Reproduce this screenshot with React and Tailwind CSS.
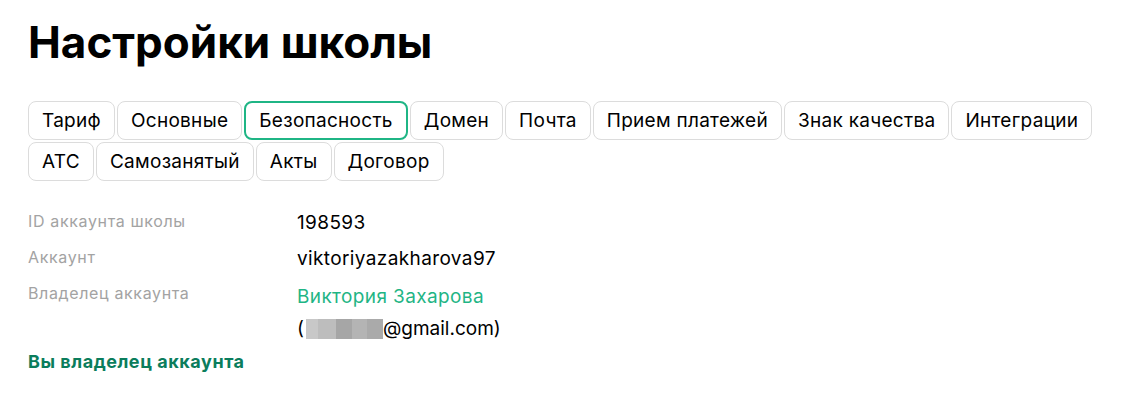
import { useState } from "react";

const tabs = [
  "Тариф",
  "Основные",
  "Безопасность",
  "Домен",
  "Почта",
  "Прием платежей",
  "Знак качества",
  "Интеграции",
  "АТС",
  "Самозанятый",
  "Акты",
  "Договор",
];

function App() {
  const [active, setActive] = useState("Безопасность");

  return (
    <div className="min-h-screen bg-white px-[28px] pt-[14px] font-['Inter',sans-serif] text-black">
      <h1 className="text-[44px] font-bold leading-[56px]">
        Настройки школы
      </h1>

      <div className="mt-[31px] flex flex-wrap gap-[2px]">
        {tabs.map((tab) => (
          <button
            key={tab}
            onClick={() => setActive(tab)}
            className={`h-[39px] rounded-[8px] border bg-white px-[13px] text-[19px] leading-none tracking-[0.015em] ${
              active === tab
                ? "border-2 border-[#1fb585]"
                : "border-[#dcdcdc]"
            }`}
          >
            {tab}
          </button>
        ))}
      </div>

      <div className="mt-[28px] flex flex-col">
        <div className="flex h-[36px]">
          <span className="w-[269px] text-[16px] tracking-[0.04em] text-[#a3a3a3]">
            ID аккаунта школы
          </span>
          <span className="text-[19px] tracking-[0.02em]">198593</span>
        </div>
        <div className="flex h-[36px]">
          <span className="w-[269px] text-[16px] tracking-[0.04em] text-[#a3a3a3]">
            Аккаунт
          </span>
          <span className="text-[19px] tracking-[0.02em]">viktoriyazakharova97</span>
        </div>
        <div className="flex">
          <span className="w-[269px] text-[16px] tracking-[0.04em] text-[#a3a3a3]">
            Владелец аккаунта
          </span>
          <div className="flex flex-col">
            <span className="text-[19px] leading-[32px] tracking-[0.02em] text-[#1fb585]">
              Виктория Захарова
            </span>
            <span className="flex items-center text-[19px] leading-[32px]">
              (
              <span className="ml-[2px] inline-flex h-[20px]">
                <span className="w-[12px] bg-[#c8c8c8]" />
                <span className="w-[18px] bg-[#bdbdbd]" />
                <span className="w-[16px] bg-[#a6a6a6]" />
                <span className="w-[15px] bg-[#b4b4b4]" />
                <span className="w-[16px] bg-[#aaaaaa]" />
              </span>
              @gmail.com)
            </span>
          </div>
        </div>
        <p className="mt-[3px] text-[18px] font-bold tracking-[0.03em] text-[#0b7d5c]">
          Вы владелец аккаунта
        </p>
      </div>
    </div>
  );
}

export default App;
